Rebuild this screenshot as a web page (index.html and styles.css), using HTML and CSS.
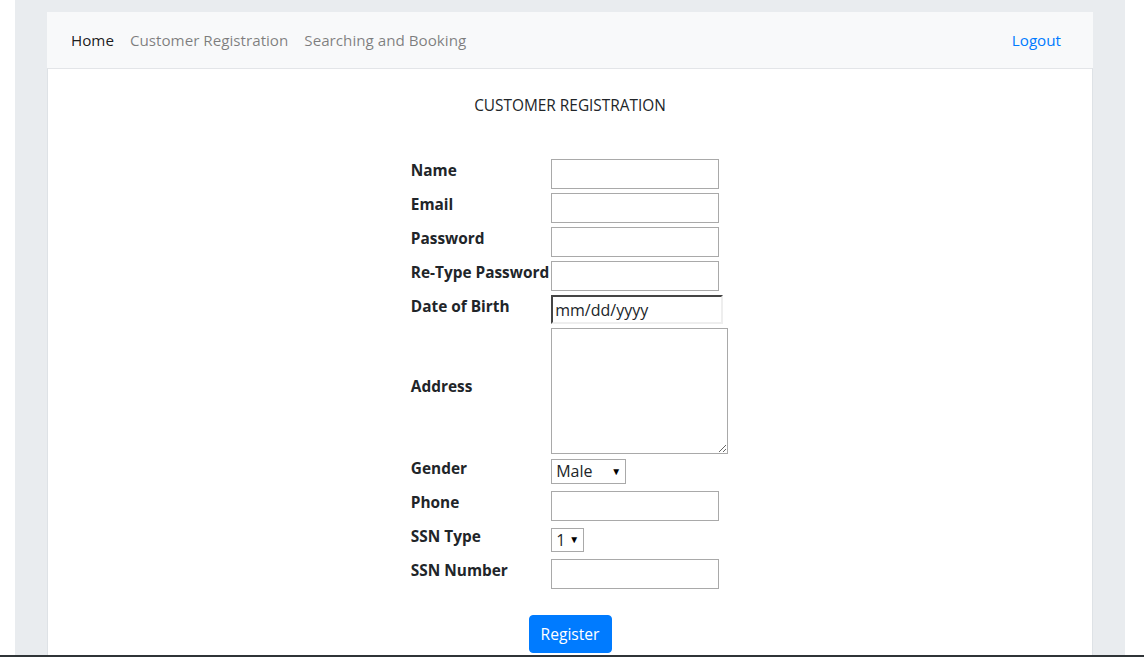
FILE: index.html
```html
<!DOCTYPE html>
<html lang="en">
<head>
<meta charset="utf-8">
<title>Customer Registration</title>
<link rel="stylesheet" href="styles.css">
</head>
<body>
<div class="page">
  <nav class="navbar">
    <ul class="nav">
      <li><a class="nav-link active" href="#">Home</a></li>
      <li><a class="nav-link" href="#">Customer Registration</a></li>
      <li><a class="nav-link" href="#">Searching and Booking</a></li>
    </ul>
    <a class="nav-link logout" href="#">Logout</a>
  </nav>
  <div class="card">
    <div class="title">CUSTOMER REGISTRATION</div>
    <form class="form">
      <table class="form-table">
        <tr><td class="lbl">Name</td><td class="fld"><input class="txt" type="text"></td></tr>
        <tr><td class="lbl">Email</td><td class="fld"><input class="txt" type="text"></td></tr>
        <tr><td class="lbl">Password</td><td class="fld"><input class="txt" type="password"></td></tr>
        <tr><td class="lbl">Re-Type Password</td><td class="fld"><input class="txt" type="password"></td></tr>
        <tr><td class="lbl">Date of Birth</td><td class="fld"><input class="date" type="text" value="mm/dd/yyyy"></td></tr>
        <tr><td class="lbl mid">Address</td><td class="fld"><textarea class="area"></textarea></td></tr>
        <tr><td class="lbl lbl-gender">Gender</td><td class="fld"><span class="sel sel-gender"><select><option>Male</option><option>Female</option></select></span></td></tr>
        <tr><td class="lbl">Phone</td><td class="fld"><input class="txt" type="text"></td></tr>
        <tr><td class="lbl">SSN Type</td><td class="fld"><span class="sel sel-ssn"><select><option>1</option><option>2</option></select></span></td></tr>
        <tr><td class="lbl">SSN Number</td><td class="fld"><input class="txt" type="text"></td></tr>
      </table>
      <div class="actions"><button type="button" class="btn">Register</button></div>
    </form>
  </div>
</div>
<div class="taskbar"></div>
</body>
</html>
```
FILE: styles.css
```css
html, body {
  margin: 0;
  padding: 0;
  background: #fff;
  font-family: "Open Sans", "Noto Sans", sans-serif;
  font-size: 16px;
  line-height: 1.5;
  color: #212529;
  overflow: hidden;
}
.page {
  margin-left: 15px;
  width: 1110px;
  box-sizing: border-box;
  background: #e9ecef;
  padding: 12px 32px 40px;
  min-height: 720px;
}
.navbar {
  display: flex;
  align-items: center;
  justify-content: space-between;
  background: #f8f9fa;
  padding: 8px 16px;
  height: 56px;
  box-sizing: border-box;
}
.nav {
  list-style: none;
  margin: 0;
  padding: 0;
  display: flex;
}
.nav-link {
  display: block;
  padding: 8px 8px;
  text-decoration: none;
  color: rgba(0,0,0,.5);
  font-size: 15.2px;
  line-height: 24px;
}
.nav-link.active { color: rgba(0,0,0,.9); }
.nav-link.logout { color: #007bff; margin-right: 8px; }
.card {
  background: #fff;
  border: 1px solid #dee2e6;
  border-top-color: #e3e5e8;
  border-radius: 0 0 4px 4px;
  min-height: 640px;
  box-sizing: border-box;
}
.title {
  text-align: center;
  font-size: 15.4px;
  margin-top: 25px;
  line-height: 24px;
}
.form {
  margin-top: 38px;
}
.form-table {
  margin: 0 auto;
  border-spacing: 2px;
}
.form-table td {
  padding: 1px;
  vertical-align: top;
}
.form-table td.lbl {
  font-weight: bold;
  font-size: 15.4px;
  width: 138px;
  line-height: 24px;
  white-space: nowrap;
  padding: 1px 0 1px 0;
}
.form-table td.fld { padding-left: 0; }
.form-table td.lbl.mid { vertical-align: middle; padding-bottom: 9px; }
.form-table td.lbl-gender { padding-top: 0; }
.txt {
  display: block;
  width: 168px;
  height: 30px;
  box-sizing: border-box;
  border: 1px solid #a9a9a9;
  padding: 1px 2px;
  margin: 0;
  font: inherit;
}
.date {
  display: block;
  width: 172px;
  height: 29px;
  box-sizing: border-box;
  border: 2px inset #ebebeb;
  border-top-color: #999;
  border-left-color: #999;
  border-right-color: #eee;
  border-bottom-color: #eee;
  padding: 0 2px;
  margin: 0;
  font-family: "Open Sans", "Noto Sans", sans-serif;
  font-size: 16px;
  color: #212529;
}
.area {
  display: block;
  width: 177px;
  height: 126px;
  box-sizing: border-box;
  border: 1px solid #a9a9a9;
  margin: 0;
  padding: 2px;
  font: inherit;
}
.sel {
  position: relative;
  display: block;
  width: fit-content;
}
.sel select {
  -webkit-appearance: none;
  appearance: none;
  display: block;
  box-sizing: border-box;
  border: 1px solid #a9a9a9;
  border-radius: 0;
  background: #fff;
  padding: 0 0 0 4px;
  font-family: "Open Sans", "Noto Sans", sans-serif;
  font-size: 16px;
  color: #212529;
}
.sel::after {
  content: "\25BC";
  position: absolute;
  top: 6px;
  right: 5px;
  font-size: 10px;
  line-height: 12px;
  color: #000;
  pointer-events: none;
}
.sel-gender { margin: 1px 0 3px; }
.sel-gender select { width: 75px; height: 25px; line-height: 23px; }
.sel-ssn { margin: 3px 0 3px; }
.sel-ssn select { width: 33px; height: 24px; line-height: 22px; }
.sel-ssn::after { top: 5px; }
.actions {
  text-align: center;
  margin-top: 23px;
}
.btn {
  background: #007bff;
  color: #fff;
  border: 1px solid #007bff;
  border-radius: 4px;
  width: 83px;
  height: 38px;
  font-family: "Open Sans", "Noto Sans", sans-serif;
  font-size: 15.6px;
  padding: 0;
}
.taskbar {
  position: fixed;
  left: 0;
  right: 0;
  bottom: 0;
  height: 2px;
  background: #2f3437;
}
```
